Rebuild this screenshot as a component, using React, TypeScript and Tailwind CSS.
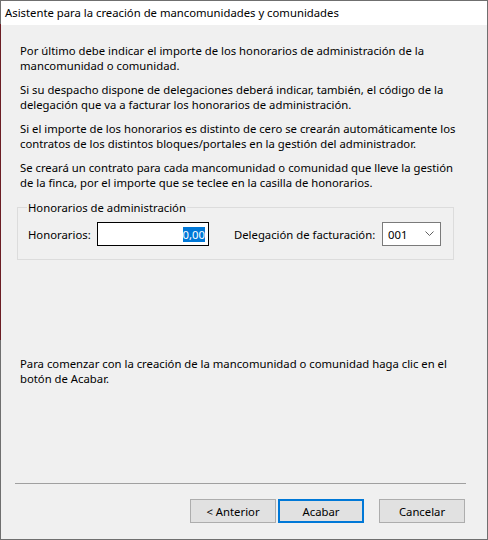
import React from 'react';

const font = { fontFamily: '"Noto Sans", "Open Sans", sans-serif' };

const Button: React.FC<{ label: string; primary?: boolean }> = ({ label, primary }) => (
  <button
    className={`flex h-[24px] w-[86px] items-center justify-center bg-[#e1e1e1] text-[11.3px] text-black ${
      primary ? 'border-2 border-[#0078d7]' : 'border border-[#adadad]'
    }`}
  >
    {label}
  </button>
);

export default function App() {
  return (
    <div className="flex h-[540px] w-[488px] text-[11.3px] leading-[15px] text-black" style={font}>
      <div className="flex w-px flex-col">
        <div className="h-[24px] bg-[#6f6f6f]" />
        <div className="h-[316px] bg-[#6b1d24]" />
        <div className="flex-1 bg-[#6f6f6f]" />
      </div>
      <div className="flex flex-1 flex-col border-y border-r border-[#6f6f6f] bg-[#f0f0f0]">
        <div className="flex h-[24px] items-center bg-white pb-px pl-[4px]">
          Asistente para la creación de mancomunidades y comunidades
        </div>

        <div className="flex flex-1 flex-col pl-[19px] pr-[20px] pt-[18px]">
          <div className="flex flex-col gap-[9px]">
            <p>Por último debe indicar el importe de los honorarios de administración de la mancomunidad o comunidad.</p>
            <p>Si su despacho dispone de delegaciones deberá indicar, también, el código de la delegación que va a facturar los honorarios de administración.</p>
            <p>Si el importe de los honorarios es distinto de cero se crearán automáticamente los contratos de los distintos bloques/portales en la gestión del administrador.</p>
            <p>Se creará un contrato para cada mancomunidad o comunidad que lleve la gestión de la finca, por el importe que se teclee en la casilla de honorarios.</p>
          </div>

          <fieldset className="-ml-[3px] mt-[10px] w-[437px] border border-[#dcdcdc] px-[10px] pb-[13px] pt-[7px]">
            <legend className="-ml-[1px] px-[1px]">Honorarios de administración</legend>
            <div className="flex items-center whitespace-nowrap">
              <span className="w-[69px]">Honorarios:</span>
              <div className="flex h-[24px] w-[112px] items-center justify-end border border-black bg-white pr-[3px]">
                <span className="bg-[#0078d7] text-white">0,00</span>
              </div>
              <span className="ml-[25px] w-[148px]">Delegación de facturación:</span>
              <div className="flex h-[24px] w-[59px] items-center justify-between border border-[#7a7a7a] bg-white pl-[5px] pr-[6px]">
                <span>001</span>
                <svg width="9" height="6" viewBox="0 0 9 6" fill="none">
                  <polyline points="0.5,0.5 4.5,4.5 8.5,0.5" stroke="#606060" strokeWidth="1" />
                </svg>
              </div>
            </div>
          </fieldset>

          <p className="mt-[96px]">
            Para comenzar con la creación de la mancomunidad o comunidad haga clic en el botón de Acabar.
          </p>
        </div>

        <div className="flex flex-col px-[14px] pb-[16px]">
          <div className="mr-[7px] h-px bg-[#a0a0a0]" />
          <div className="mt-[15px] flex justify-end gap-[2px] pr-[8px]">
            <Button label="< Anterior" />
            <Button label="Acabar" primary />
            <div className="w-[11px]" />
            <Button label="Cancelar" />
          </div>
        </div>
      </div>
    </div>
  );
}
